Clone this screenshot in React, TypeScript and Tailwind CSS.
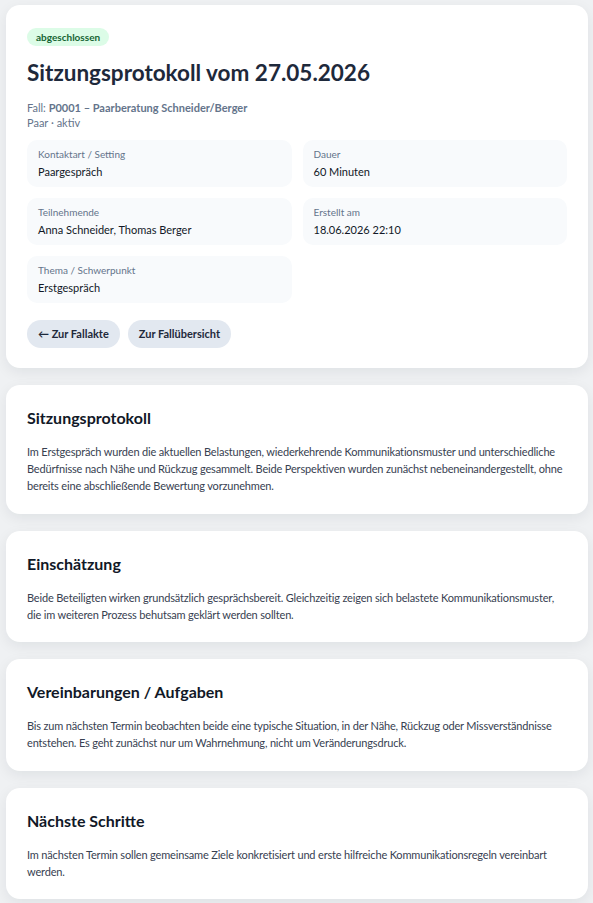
const font = { fontFamily: 'Lato, "Noto Sans", Arial, sans-serif' };

type Field = { label: string; value: string };

const fields: Field[] = [
  { label: "Kontaktart / Setting", value: "Paargespräch" },
  { label: "Dauer", value: "60 Minuten" },
  { label: "Teilnehmende", value: "Anna Schneider, Thomas Berger" },
  { label: "Erstellt am", value: "18.06.2026 22:10" },
  { label: "Thema / Schwerpunkt", value: "Erstgespräch" },
];

const sections = [
  {
    title: "Sitzungsprotokoll",
    text: "Im Erstgespräch wurden die aktuellen Belastungen, wiederkehrende Kommunikationsmuster und unterschiedliche Bedürfnisse nach Nähe und Rückzug gesammelt. Beide Perspektiven wurden zunächst nebeneinandergestellt, ohne bereits eine abschließende Bewertung vorzunehmen.",
  },
  {
    title: "Einschätzung",
    text: "Beide Beteiligten wirken grundsätzlich gesprächsbereit. Gleichzeitig zeigen sich belastete Kommunikationsmuster, die im weiteren Prozess behutsam geklärt werden sollten.",
  },
  {
    title: "Vereinbarungen / Aufgaben",
    text: "Bis zum nächsten Termin beobachten beide eine typische Situation, in der Nähe, Rückzug oder Missverständnisse entstehen. Es geht zunächst nur um Wahrnehmung, nicht um Veränderungsdruck.",
  },
  {
    title: "Nächste Schritte",
    text: "Im nächsten Termin sollen gemeinsame Ziele konkretisiert und erste hilfreiche Kommunikationsregeln vereinbart werden.",
  },
];

function Card({ children }: { children: React.ReactNode }) {
  return (
    <section className="bg-white rounded-[14px] shadow-[0_4px_14px_rgba(15,23,42,0.07)] px-[21px]">
      {children}
    </section>
  );
}

export default function App() {
  return (
    <div style={font} className="min-h-screen bg-[#eff1f3] pl-[6px] pr-[5px] pt-[5px] pb-[5px] flex flex-col gap-[17px]">
      <Card>
        <div className="pt-[23px] pb-[20px]">
          <span className="flex w-fit items-center h-[18px] px-[9px] rounded-full bg-[#dcfce7] text-[#166534] text-[10px] font-bold">
            abgeschlossen
          </span>
          <h1 className="mt-[13px] text-[22.5px] leading-[28px] font-bold text-[#1e293b]">
            Sitzungsprotokoll vom 27.05.2026
          </h1>
          <p className="mt-[13px] text-[11px] leading-[15px] text-[#64748b]">
            Fall: <span className="font-bold">P0001 – Paarberatung Schneider/Berger</span>
          </p>
          <p className="text-[11px] leading-[15px] text-[#64748b]">Paar · aktiv</p>

          <div className="mt-[10px] grid grid-cols-2 gap-[11px]">
            {fields.map((f) => (
              <div key={f.label} className="bg-[#f8fafc] rounded-[10px] h-[47px] px-[11px] pt-[8px]">
                <div className="text-[10px] leading-[13px] text-[#64748b]">{f.label}</div>
                <div className="mt-[3px] text-[11px] leading-[15px] text-[#111827]">{f.value}</div>
              </div>
            ))}
          </div>

          <div className="mt-[17px] flex gap-[8px]">
            <button className="h-[28px] px-[11px] rounded-full bg-[#e2e8f0] text-[11px] font-bold text-[#1e293b]">
              ← Zur Fallakte
            </button>
            <button className="h-[28px] px-[11px] rounded-full bg-[#e2e8f0] text-[11px] font-bold text-[#1e293b]">
              Zur Fallübersicht
            </button>
          </div>
        </div>
      </Card>

      {sections.map((s) => (
        <Card key={s.title}>
          <div className="pt-[22px] pb-[19.5px]">
            <h2 className="text-[16px] leading-[22px] font-bold text-[#111827]">{s.title}</h2>
            <p className="mt-[14px] text-[11px] leading-[17px] tracking-[-0.17px] text-[#374151]">{s.text}</p>
          </div>
        </Card>
      ))}
    </div>
  );
}
